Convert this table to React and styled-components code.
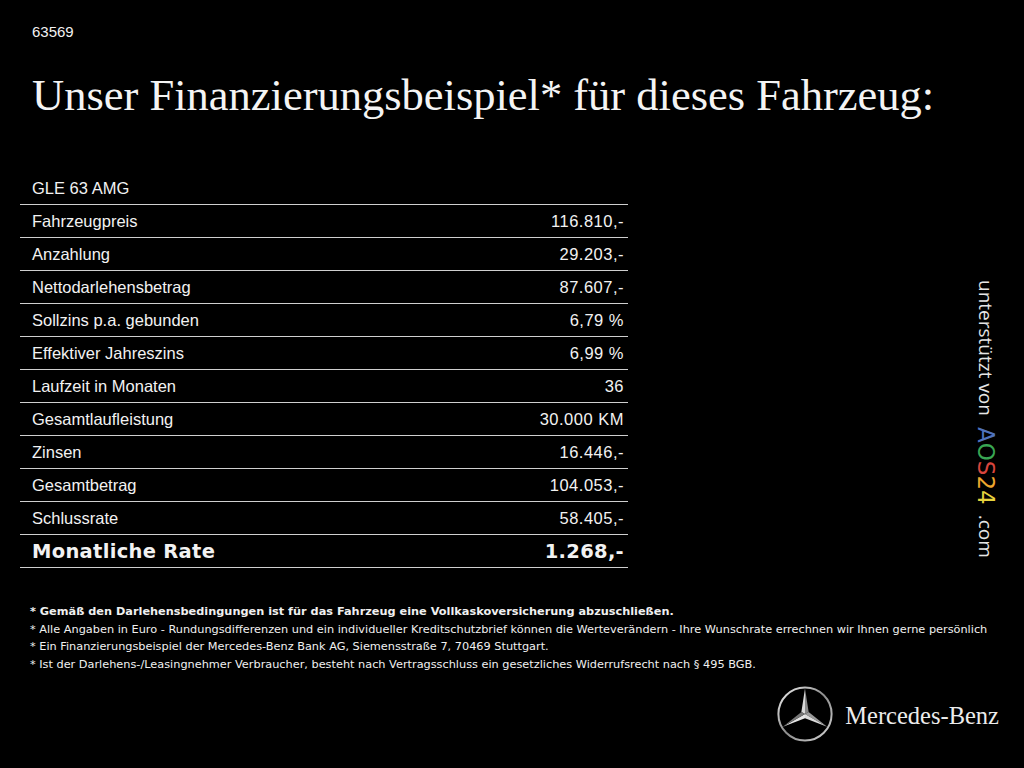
import styled, { createGlobalStyle } from "styled-components";

const rows = [
  { label: "Fahrzeugpreis", value: "116.810,-" },
  { label: "Anzahlung", value: "29.203,-" },
  { label: "Nettodarlehensbetrag", value: "87.607,-" },
  { label: "Sollzins p.a. gebunden", value: "6,79 %" },
  { label: "Effektiver Jahreszins", value: "6,99 %" },
  { label: "Laufzeit in Monaten", value: "36" },
  { label: "Gesamtlaufleistung", value: "30.000 KM" },
  { label: "Zinsen", value: "16.446,-" },
  { label: "Gesamtbetrag", value: "104.053,-" },
  { label: "Schlussrate", value: "58.405,-" },
];

const notes = [
  "* Gemäß den Darlehensbedingungen ist für das Fahrzeug eine Vollkaskoversicherung abzuschließen.",
  "* Alle Angaben in Euro - Rundungsdifferenzen und ein individueller Kreditschutzbrief können die Werteverändern - Ihre Wunschrate errechnen wir Ihnen gerne persönlich",
  "* Ein Finanzierungsbeispiel der Mercedes-Benz Bank AG, Siemensstraße 7, 70469 Stuttgart.",
  "* Ist der Darlehens-/Leasingnehmer Verbraucher, besteht nach Vertragsschluss ein gesetzliches Widerrufsrecht nach § 495 BGB.",
];

const aosLetters = [
  { ch: "A", color: "#4f72bd" },
  { ch: "O", color: "#39a653" },
  { ch: "S", color: "#d8453d" },
  { ch: "2", color: "#eea62e" },
  { ch: "4", color: "#e6d23e" },
];

const GlobalStyle = createGlobalStyle`
  html, body {
    margin: 0;
    background: #000;
  }
  body {
    width: 1024px;
    height: 768px;
    overflow: hidden;
    color: #fff;
    font-family: "Liberation Sans", Arial, sans-serif;
  }
`;

const Page = styled.div`
  width: 1024px;
  height: 768px;
  box-sizing: border-box;
  padding: 23px 20px 0 20px;
  display: flex;
  flex-direction: column;
  background: #000;
`;

const Code = styled.div`
  margin-left: 12px;
  font-size: 15px;
  line-height: 18px;
  color: #f2f2f2;
`;

const Title = styled.h1`
  margin: 28px 0 0 12px;
  font-family: "Liberation Serif", "Times New Roman", serif;
  font-weight: normal;
  font-size: 44.5px;
  line-height: 52px;
  color: #f4f4f4;
  white-space: nowrap;
`;

const Middle = styled.div`
  margin-top: 51px;
  display: grid;
  grid-template-columns: 608px 1fr;
`;

const Table = styled.div`
  display: flex;
  flex-direction: column;
`;

const Row = styled.div`
  height: 33px;
  box-sizing: border-box;
  padding: 0 4px 0 12px;
  display: flex;
  align-items: center;
  justify-content: space-between;
  border-bottom: 1px solid #cfcfcf;
  font-family: ${(p) =>
    p.$strong ? '"DejaVu Sans", Verdana, sans-serif' : '"Liberation Sans", Arial, sans-serif'};
  font-size: ${(p) => (p.$strong ? "19.5px" : "16.5px")};
  font-weight: ${(p) => (p.$strong ? "bold" : "normal")};
  letter-spacing: ${(p) => (p.$strong ? "0.3px" : "0")};
  color: #f2f2f2;
  white-space: nowrap;
`;

const Value = styled.span`
  letter-spacing: ${(p) => (p.$strong ? "0.3px" : "0.5px")};
`;

const Side = styled.div`
  justify-self: end;
  align-self: end;
  margin: 0 8px 10px 0;
  writing-mode: vertical-rl;
  font-family: "Open Sans", "DejaVu Sans", sans-serif;
  font-size: 19px;
  line-height: 20px;
  color: #e6e6e6;
  white-space: nowrap;
`;

const Brand = styled.span`
  margin-inline: 11px 10px;
  font-family: "DejaVu Sans", sans-serif;
  font-size: 23px;
`;

const Letter = styled.span`
  color: ${(p) => p.$color};
`;

const Notes = styled.div`
  margin: 35px 0 0 10px;
  font-family: "DejaVu Sans", Verdana, sans-serif;
  font-size: 11.3px;
  line-height: 17.7px;
  color: #f0f0f0;
  white-space: nowrap;
`;

const Note = styled.div`
  font-weight: ${(p) => (p.$bold ? "bold" : "normal")};
`;

const Footer = styled.div`
  margin: 12px 5px 0 0;
  display: flex;
  align-items: center;
  justify-content: flex-end;
  gap: 12px;
`;

const Wordmark = styled.span`
  font-family: "Liberation Serif", "Times New Roman", serif;
  font-size: 24.5px;
  color: #ececec;
  padding-top: 4px;
`;

function Star() {
  const c = 28;
  const R = 25.5;
  const r = 4.2;
  const pt = (deg, rad) => {
    const a = (deg * Math.PI) / 180;
    return [c + rad * Math.cos(a), c + rad * Math.sin(a)];
  };
  const arms = [-90, 30, 150];
  const facets = [];
  arms.forEach((deg, i) => {
    const tip = pt(deg, R);
    const left = pt(deg - 60, r);
    const right = pt(deg + 60, r);
    facets.push(
      <polygon
        key={`a${i}`}
        points={`${c},${c} ${tip.join(",")} ${left.join(",")}`}
        fill={i === 0 ? "#d9d9d9" : i === 1 ? "#9a9a9a" : "#e6e6e6"}
      />,
      <polygon
        key={`b${i}`}
        points={`${c},${c} ${tip.join(",")} ${right.join(",")}`}
        fill={i === 0 ? "#8a8a8a" : i === 1 ? "#dcdcdc" : "#777"}
      />
    );
  });
  return (
    <svg width="56" height="56" viewBox="0 0 56 56">
      <defs>
        <linearGradient id="ring" x1="0" y1="0" x2="1" y2="1">
          <stop offset="0" stopColor="#f2f2f2" />
          <stop offset="0.5" stopColor="#8c8c8c" />
          <stop offset="1" stopColor="#d6d6d6" />
        </linearGradient>
      </defs>
      <circle cx={c} cy={c} r="26.6" fill="none" stroke="url(#ring)" strokeWidth="2" />
      {facets}
    </svg>
  );
}

export default function App() {
  return (
    <>
      <GlobalStyle />
      <Page>
        <Code>63569</Code>
        <Title>Unser Finanzierungsbeispiel* für dieses Fahrzeug:</Title>
        <Middle>
          <Table>
            <Row>
              <span>GLE 63 AMG</span>
            </Row>
            {rows.map((row) => (
              <Row key={row.label}>
                <span>{row.label}</span>
                <Value>{row.value}</Value>
              </Row>
            ))}
            <Row $strong>
              <span>Monatliche Rate</span>
              <Value $strong>1.268,-</Value>
            </Row>
          </Table>
          <Side>
            unterstützt von
            <Brand>
              {aosLetters.map((l) => (
                <Letter key={l.ch} $color={l.color}>
                  {l.ch}
                </Letter>
              ))}
            </Brand>
            .com
          </Side>
        </Middle>
        <Notes>
          {notes.map((n, i) => (
            <Note key={i} $bold={i === 0}>
              {n}
            </Note>
          ))}
        </Notes>
        <Footer>
          <Star />
          <Wordmark>Mercedes-Benz</Wordmark>
        </Footer>
      </Page>
    </>
  );
}
